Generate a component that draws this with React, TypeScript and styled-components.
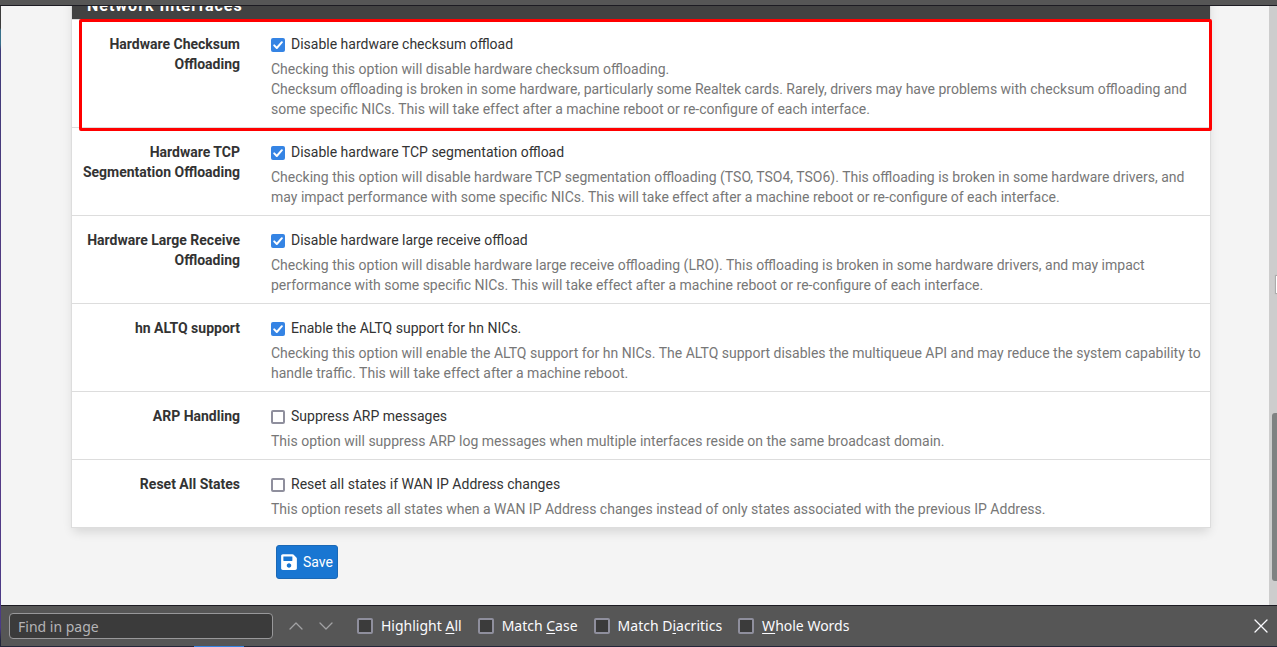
import React, { useId } from "react";
import styled, { createGlobalStyle } from "styled-components";
import { FaSave } from "react-icons/fa";

const GlobalStyle = createGlobalStyle`
  * { box-sizing: border-box; }
  body {
    margin: 0;
    background: #f4f4f4;
    color: #333;
    font: 14px/20px Roboto, "Liberation Sans", sans-serif;
  }
`;

const Desktop = styled.div`
  height: 100vh;
  display: flex;
  flex-direction: column;
  overflow: hidden;
  padding-left: 1px;
  background: linear-gradient(#3c3c3c 0 28px, #38708a 30px 44px, #3f3a78 50px, #5a3a86 60%, #4a3a86 97%, #23263a 99%);
`;

const Toolbar = styled.header`
  flex: none;
  height: 6px;
  margin-left: -1px;
  background: #565656;
  border-bottom: 1px solid #1c1b22;
`;

const Viewport = styled.div`
  flex: 1;
  min-height: 0;
  display: flex;
  background: #f4f4f4;
`;

const Page = styled.main`
  flex: 1;
  min-width: 0;
  overflow: hidden;
  padding: 0 58px 0 70px;
`;

const Panel = styled.section`
  margin-top: -22px;
  background: #fff;
  border: 1px solid #ddd;
  border-top: 0;
  box-shadow: 0 6px 10px -2px rgba(0, 0, 0, 0.12);
`;

const PanelTitle = styled.h2`
  margin: 0;
  padding: 12px 15px 3px;
  border-bottom: 1px solid #ddd;
  background: #424242;
  background-clip: padding-box;
  color: #fff;
  font-size: 16px;
  line-height: 20px;
  font-weight: 700;
  letter-spacing: 1px;
`;

const Row = styled.div`
  position: relative;
  display: grid;
  grid-template-columns: 168px 1fr;
  column-gap: 31px;
  padding: 14px 5px 8px 0;
  border-bottom: 1px solid #ddd;

  &:last-child { border-bottom: 0; }
`;

const Highlight = styled.div`
  position: absolute;
  inset: -1px -2px -4px 7px;
  z-index: 1;
  border: 3px solid #f00;
  border-radius: 2px;
  pointer-events: none;
`;

const RowName = styled.div`
  font-weight: 700;
  text-align: right;
`;

const Option = styled.label`
  display: flex;
  align-items: center;
  gap: 6px;
`;

const Check = styled.input`
  appearance: none;
  flex: none;
  width: 14px;
  height: 14px;
  margin: 2px 0 0;
  border: 2px solid #8f8f9d;
  border-radius: 2px;
  background: #fff;

  &:checked {
    border: 0;
    background: #3584e4;
  }
`;

const CheckBox = styled.span`
  position: relative;
  display: flex;

  svg {
    position: absolute;
    inset: 2px 0 0;
    pointer-events: none;
  }
`;

const Help = styled.p`
  margin: 5px 0 0;
  color: #777;
`;

const SaveButton = styled.button`
  display: flex;
  align-items: center;
  gap: 5px;
  height: 34px;
  margin: 17px 0 0 205px;
  padding: 0 4px 0 3px;
  border: 1px solid #1b68b5;
  border-radius: 3px;
  background: #1976d2;
  color: #fff;
  font: inherit;
`;

const ScrollTrack = styled.div`
  position: relative;
  flex: none;
  width: 8px;
  background: #cdcdcd;
`;

const ScrollThumb = styled.div`
  position: absolute;
  inset: 68% 0 4%;
  left: 3px;
  border-radius: 3px 0 0 3px;
  background: #7f8282;
`;

const EdgeMark = styled.div`
  position: absolute;
  top: 45%;
  right: 0;
  width: 1px;
  height: 17px;
  background: #fff;
  box-shadow: 0 0 1px 1px #a8a8a8;
`;

const FindBar = styled.form`
  flex: none;
  display: flex;
  align-items: center;
  height: 41px;
  padding: 0 8px;
  border-top: 1px solid #1c1b22;
  background: #565656;
  color: #fbfbfe;
  font: 14px/20px "Noto Sans", sans-serif;
`;

const FindInput = styled.input`
  width: 264px;
  height: 26px;
  margin-right: 8px;
  padding: 0 8px;
  border: 1px solid #98989a;
  border-radius: 4px;
  background: #3b3b3b;
  color: #fbfbfe;
  font: inherit;

  &::placeholder { color: #b4b4b6; opacity: 1; }
`;

const IconButton = styled.button<{ $bright?: boolean }>`
  display: flex;
  align-items: center;
  justify-content: center;
  width: 30px;
  height: 24px;
  margin-left: ${(p) => (p.$bright ? "auto" : "0")};
  margin-right: ${(p) => (p.$bright ? "-7px" : "0")};
  padding: 0;
  border: 0;
  background: none;
  color: ${(p) => (p.$bright ? "#fbfbfe" : "#a2a2a4")};
`;

const FindOptions = styled.div`
  display: flex;
  gap: 16px;
  margin-left: 16px;
`;

const FindOption = styled.label`
  display: flex;
  align-items: center;
  gap: 8px;
  white-space: nowrap;

  u { text-underline-offset: 2px; }
`;

const FindCheck = styled.input`
  appearance: none;
  width: 16px;
  height: 16px;
  margin: 0;
  border: 2px solid #8f8f9d;
  border-radius: 2px;
  background: #3b3b3b;
`;

const Taskbar = styled.footer`
  flex: none;
  height: 1px;
  margin-left: -1px;
  padding-left: 194px;
  background: #23263a;
`;

const ActiveTask = styled.div`
  width: 50px;
  height: 1px;
  background: #3584e4;
`;

type Setting = {
  name: string;
  option: string;
  help: string[];
  checked?: boolean;
  highlighted?: boolean;
};

const settings: Setting[] = [
  {
    name: "Hardware Checksum Offloading",
    option: "Disable hardware checksum offload",
    help: [
      "Checking this option will disable hardware checksum offloading.",
      "Checksum offloading is broken in some hardware, particularly some Realtek cards. Rarely, drivers may have problems with checksum offloading and some specific NICs. This will take effect after a machine reboot or re-configure of each interface.",
    ],
    checked: true,
    highlighted: true,
  },
  {
    name: "Hardware TCP Segmentation Offloading",
    option: "Disable hardware TCP segmentation offload",
    help: [
      "Checking this option will disable hardware TCP segmentation offloading (TSO, TSO4, TSO6). This offloading is broken in some hardware drivers, and may impact performance with some specific NICs. This will take effect after a machine reboot or re-configure of each interface.",
    ],
    checked: true,
  },
  {
    name: "Hardware Large Receive Offloading",
    option: "Disable hardware large receive offload",
    help: [
      "Checking this option will disable hardware large receive offloading (LRO). This offloading is broken in some hardware drivers, and may impact performance with some specific NICs. This will take effect after a machine reboot or re-configure of each interface.",
    ],
    checked: true,
  },
  {
    name: "hn ALTQ support",
    option: "Enable the ALTQ support for hn NICs.",
    help: [
      "Checking this option will enable the ALTQ support for hn NICs. The ALTQ support disables the multiqueue API and may reduce the system capability to handle traffic. This will take effect after a machine reboot.",
    ],
    checked: true,
  },
  {
    name: "ARP Handling",
    option: "Suppress ARP messages",
    help: ["This option will suppress ARP log messages when multiple interfaces reside on the same broadcast domain."],
  },
  {
    name: "Reset All States",
    option: "Reset all states if WAN IP Address changes",
    help: [
      "This option resets all states when a WAN IP Address changes instead of only states associated with the previous IP Address.",
    ],
  },
];

function SettingRow({ name, option, help, checked, highlighted }: Setting) {
  const id = useId();
  return (
    <Row>
      <RowName>{name}</RowName>
      <div>
        <Option htmlFor={id}>
          <CheckBox>
            <Check id={id} type="checkbox" defaultChecked={checked} />
            {checked && (
              <svg width="14" height="14" viewBox="0 0 14 14" fill="none" stroke="#fff" strokeWidth="2" strokeLinecap="round" strokeLinejoin="round">
                <path d="M3.2 7.4 5.8 10 10.9 4.2" />
              </svg>
            )}
          </CheckBox>
          {option}
        </Option>
        <Help>
          {help.map((line, i) => (
            <React.Fragment key={line}>
              {i > 0 && <br />}
              {line}
            </React.Fragment>
          ))}
        </Help>
      </div>
      {highlighted && <Highlight />}
    </Row>
  );
}

function LineIcon({ d }: { d: string }) {
  return (
    <svg width="14" height="14" viewBox="0 0 14 14" fill="none" stroke="currentColor" strokeWidth="1.3" strokeLinecap="round" strokeLinejoin="round">
      <path d={d} />
    </svg>
  );
}

export default function App() {
  return (
    <>
      <GlobalStyle />
      <Desktop>
        <Toolbar />
        <Viewport>
          <Page>
            <Panel>
              <PanelTitle>Network Interfaces</PanelTitle>
              <div>
                {settings.map((s) => (
                  <SettingRow key={s.name} {...s} />
                ))}
              </div>
            </Panel>
            <SaveButton type="button">
              <FaSave size={18} />
              Save
            </SaveButton>
          </Page>
          <ScrollTrack>
            <EdgeMark />
            <ScrollThumb />
          </ScrollTrack>
        </Viewport>
        <FindBar onSubmit={(e) => e.preventDefault()}>
          <FindInput type="text" placeholder="Find in page" aria-label="Find in page" />
          <IconButton type="button" aria-label="Previous match">
            <LineIcon d="M1 10 7 4l6 6" />
          </IconButton>
          <IconButton type="button" aria-label="Next match">
            <LineIcon d="M1 4l6 6 6-6" />
          </IconButton>
          <FindOptions>
            <FindOption>
              <FindCheck type="checkbox" />
              <span>Highlight <u>A</u>ll</span>
            </FindOption>
            <FindOption>
              <FindCheck type="checkbox" />
              <span>Match <u>C</u>ase</span>
            </FindOption>
            <FindOption>
              <FindCheck type="checkbox" />
              <span>Match D<u>i</u>acritics</span>
            </FindOption>
            <FindOption>
              <FindCheck type="checkbox" />
              <span><u>W</u>hole Words</span>
            </FindOption>
          </FindOptions>
          <IconButton type="button" $bright aria-label="Close find bar">
            <LineIcon d="M1 1l12 12M13 1 1 13" />
          </IconButton>
        </FindBar>
        <Taskbar>
          <ActiveTask />
        </Taskbar>
      </Desktop>
    </>
  );
}
